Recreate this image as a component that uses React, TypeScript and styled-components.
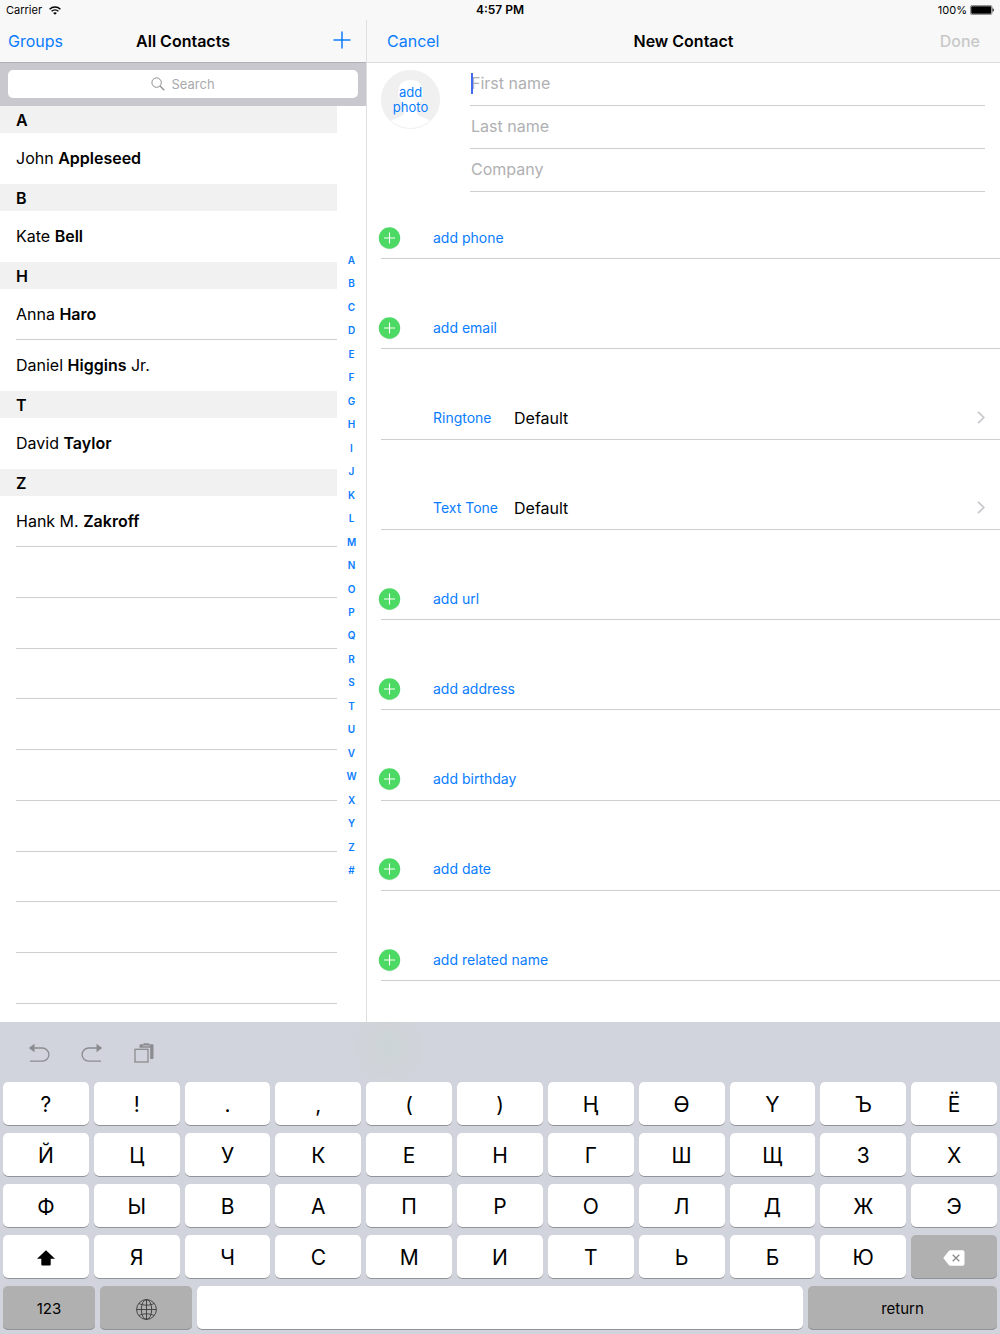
import React from "react";
import styled, { createGlobalStyle, css } from "styled-components";

const BLUE = "#0a7cff";
const LINE = "#cfced2";

const GlobalStyle = createGlobalStyle`
  *, *::before, *::after { box-sizing: border-box; }
  body {
    margin: 0;
    background: #fff;
    color: #000;
    font-family: Inter, "Liberation Sans", sans-serif;
    font-size: 16px;
  }
  button, input { font: inherit; color: inherit; }
  button { padding: 0; border: 0; background: none; text-align: inherit; }
  a { color: inherit; text-decoration: none; }
  ul { list-style: none; margin: 0; padding: 0; }
  svg { display: block; flex: none; }
`;

const Screen = styled.div`
  min-height: 100vh;
  display: flex;
  flex-direction: column;
`;

const StatusBar = styled.div`
  display: grid;
  grid-template-columns: 1fr auto 1fr;
  align-items: center;
  height: 20px;
  padding: 0 6px;
  background: #f8f8f8;
  font-size: 11px;
  line-height: 20px;
`;

const StatusSide = styled.div<{ $end?: boolean }>`
  display: flex;
  align-items: center;
  gap: ${(p) => (p.$end ? 3 : 7)}px;
  justify-content: ${(p) => (p.$end ? "flex-end" : "flex-start")};
`;

const Time = styled.time`
  font-size: 12px;
  font-weight: 600;
`;

const Split = styled.main`
  flex: 1;
  display: grid;
  grid-template-columns: 367px 1fr;
`;

const Pane = styled.section<{ $master?: boolean }>`
  display: flex;
  flex-direction: column;
  min-width: 0;
  ${(p) => p.$master && css`border-right: 1px solid #dfdfe1;`}
`;

const NavBar = styled.header<{ $master?: boolean }>`
  display: grid;
  grid-template-columns: 1fr auto 1fr;
  align-items: center;
  height: 43px;
  padding: ${(p) => (p.$master ? "0 8px" : "0 20px")};
  background: #f8f8f8;
  border-bottom: 1px solid ${(p) => (p.$master ? "#b1b0b5" : "#dcdcdc")};
`;

const Title = styled.h1`
  margin: 0;
  font-size: 16px;
  font-weight: 600;
  line-height: 20px;
`;

const NavButton = styled.button<{ $end?: boolean; $icon?: boolean }>`
  justify-self: ${(p) => (p.$end ? "end" : "start")};
  padding: ${(p) => (p.$icon ? "4px 7px 6px" : "0")};
  color: ${BLUE};
  line-height: 20px;
  &:disabled { color: #c8c8c8; font-weight: 500; }
`;

const SearchBar = styled.div`
  height: 43px;
  padding: 7px 8px 8px;
  background: #c9c8ce;
`;

const SearchField = styled.label`
  display: flex;
  align-items: center;
  justify-content: center;
  gap: 7px;
  height: 28px;
  border-radius: 5px;
  background: #fff;
`;

const SearchInput = styled.input`
  width: 44px;
  padding: 0;
  border: 0;
  outline: 0;
  background: none;
  font-size: 13px;
  &::placeholder { color: #a9a9ad; opacity: 1; }
`;

const ListArea = styled.div`
  flex: 1;
  display: grid;
  grid-template-columns: 1fr 29px;
`;

const Contacts = styled.div`
  display: flex;
  flex-direction: column;
  padding-bottom: 18px;
`;

const SectionHeader = styled.h2`
  margin: 0;
  padding-left: 16px;
  height: 27px;
  background: #f1f1f1;
  font-size: 16px;
  font-weight: 600;
  line-height: 29px;
`;

const ContactRow = styled.li<{ $line: boolean }>`
  height: 51px;
  margin-left: 16px;
  border-bottom: 1px solid ${(p) => (p.$line ? LINE : "transparent")};
  line-height: 51px;
`;

const Surname = styled.b`
  font-weight: 600;
`;

const BlankRows = styled.div`
  flex: 1;
  display: grid;
  grid-auto-rows: 1fr;
  margin-left: 16px;
`;

const BlankRow = styled.div`
  min-height: 50px;
  border-bottom: 1px solid ${LINE};
`;

const LetterIndex = styled.nav`
  display: flex;
  flex-direction: column;
  padding: 142px 0 140px;
`;

const Letter = styled.a`
  flex: 1;
  display: grid;
  place-items: center;
  color: ${BLUE};
  font-size: 10px;
  font-weight: 600;
  line-height: 12px;
`;

const Form = styled.form`
  flex: 1;
  display: flex;
  flex-direction: column;
  padding: 0 0 41px 14px;
`;

const Identity = styled.div`
  display: grid;
  grid-template-columns: 89px 1fr;
  align-items: start;
  padding-right: 15px;
`;

const PhotoButton = styled.button`
  display: grid;
  place-items: center;
  width: 59px;
  height: 59px;
  margin-top: 7px;
  color: ${BLUE};
  font-size: 13px;
  line-height: 15px;
  text-align: center;
  & > * { grid-area: 1 / 1; }
`;

const PhotoLabel = styled.span`
  width: 40px;
`;

const NameField = styled.label`
  position: relative;
  display: block;
  height: 43px;
  border-bottom: 1px solid ${LINE};
`;

const NameInput = styled.input`
  display: block;
  width: 100%;
  height: 40px;
  padding: 0 1px;
  border: 0;
  outline: 0;
  background: none;
  caret-color: transparent;
  &::placeholder { color: #b0b0b3; opacity: 1; }
`;

const Caret = styled.span`
  position: absolute;
  left: 1px;
  top: 10px;
  width: 2px;
  height: 21px;
  background: #426bf2;
`;

const Group = styled.div<{ $first: boolean }>`
  flex: ${(p) => (p.$first ? "none" : "1")};
  min-height: ${(p) => (p.$first ? 67 : 90)}px;
  display: flex;
  flex-direction: column;
  justify-content: flex-end;
`;

const FieldRow = styled.button<{ $value?: boolean }>`
  display: grid;
  grid-template-columns: ${(p) => (p.$value ? "81px 1fr auto" : "52px 1fr")};
  align-items: center;
  height: ${(p) => (p.$value ? 43 : 42)}px;
  padding: ${(p) => (p.$value ? "0 15px 0 52px" : "0")};
  border-bottom: 1px solid ${LINE};
`;

const FieldLabel = styled.span`
  color: ${BLUE};
  font-size: 14px;
  line-height: 20px;
`;

const FieldValue = styled.span`
  line-height: 20px;
`;

const Badge = styled.svg`
  margin-left: -3px;
`;

const Keyboard = styled.section`
  padding: 0 3px 4px;
  background: radial-gradient(circle at 389px 24px, #cdd4d7 8px, #cfd3d8 20px, #d1d4dc 42px);
`;

const KeyTools = styled.div`
  display: flex;
  align-items: center;
  gap: 31px;
  height: 60px;
  padding: 2px 0 0 25px;
  color: #8b8c90;
`;

const KeyRows = styled.div`
  display: grid;
  gap: 7px;
`;

const KeyRow = styled.div<{ $bottom?: boolean }>`
  display: grid;
  grid-template-columns: ${(p) => (p.$bottom ? "92px 92px 1fr 189px" : "repeat(11, 1fr)")};
  gap: 5px;
`;

const Key = styled.button<{ $dark?: boolean; $word?: boolean }>`
  display: grid;
  place-items: center;
  height: 44px;
  padding-top: 2px;
  border-radius: 5px;
  background: ${(p) => (p.$dark ? "#b0b0b0" : "#fff")};
  box-shadow: inset 0 -1px 0 #919398;
  font-size: ${(p) => (p.$word ? 15 : 21)}px;
  line-height: 24px;
`;

const WifiIcon = () => (
  <svg width="12" height="9" viewBox="0 0 12 9" fill="none" stroke="#000" strokeWidth="1.4">
    <path d="M0.6 3.2C3.6 0.2 8.4 0.2 11.4 3.2" />
    <path d="M2.6 5.3C4.5 3.4 7.5 3.4 9.4 5.3" />
    <path d="M6 8.8L4.1 6.9C5.2 5.9 6.8 5.9 7.9 6.9Z" fill="#000" stroke="none" />
  </svg>
);

const BatteryIcon = () => (
  <svg width="24" height="10" viewBox="0 0 24 10">
    <rect x="0.4" y="0.4" width="21.6" height="9.2" rx="1.8" fill="#fff" stroke="#555" strokeWidth="0.7" />
    <rect x="1.2" y="1.2" width="20" height="7.6" rx="1" />
    <path d="M22.6 3.2C24.2 3.6 24.2 6.4 22.6 6.8Z" />
  </svg>
);

const AddIcon = () => (
  <svg width="18" height="18" viewBox="0 0 18 18" stroke={BLUE} strokeWidth="1.5">
    <path d="M9 0.5V17.5M0.5 9H17.5" />
  </svg>
);

const SearchIcon = () => (
  <svg width="14" height="14" viewBox="0 0 14 14" fill="none" stroke="#8e8e93">
    <circle cx="5.6" cy="5.6" r="4.7" />
    <path d="M9 9L13.3 13.2" strokeWidth="1.3" />
  </svg>
);

const Silhouette = () => (
  <svg width="59" height="59" viewBox="0 0 59 59">
    <defs>
      <clipPath id="round"><circle cx="29.5" cy="29.5" r="29" /></clipPath>
    </defs>
    <circle cx="29.5" cy="29.5" r="29.3" fill="#f0f0f0" />
    <g clipPath="url(#round)" fill="#fff">
      <path d="M29.5 10C37 10 41.5 14 41.5 21C42.5 22 42 26 40.5 27C39.5 32 37.5 35 36 37V44C38 47 46 48 52 52V60H7V52C13 48 21 47 23 44V37C21.5 35 19.5 32 18.5 27C17 26 16.5 22 17.5 21C17.5 14 22 10 29.5 10Z" />
    </g>
    <circle cx="29.5" cy="29.5" r="29" fill="none" stroke="#f0f0f0" />
  </svg>
);

const PlusBadge = () => (
  <Badge width="24" height="24" viewBox="0 0 24 24">
    <circle cx="11.5" cy="12.6" r="10.7" fill="#dcebdf" />
    <circle cx="11.5" cy="12" r="10.7" fill="#4cd964" />
    <path d="M11.5 6.5V17.5M6 12H17" stroke="#fff" strokeWidth="1.1" />
  </Badge>
);

const Chevron = () => (
  <svg width="8" height="13" viewBox="0 0 8 13" fill="none" stroke="#c7c7cc" strokeWidth="1.7">
    <path d="M1 0.8L6.8 6.5L1 12.2" />
  </svg>
);

const UndoIcon = () => (
  <svg width="22" height="20" viewBox="0 0 22 20" fill="none" stroke="currentColor" strokeWidth="1.3">
    <path d="M5 5H14.3A6.6 6.6 0 0 1 14.3 18.2H2" />
    <path d="M0.8 5L6.5 0.8V9.2Z" fill="currentColor" stroke="none" />
  </svg>
);

const RedoIcon = () => (
  <svg width="22" height="20" viewBox="0 0 22 20" fill="none" stroke="currentColor" strokeWidth="1.3">
    <path d="M17 5H7.7A6.6 6.6 0 0 0 7.7 18.2H20" />
    <path d="M21.2 5L15.5 0.8V9.2Z" fill="currentColor" stroke="none" />
  </svg>
);

const PasteIcon = () => (
  <svg width="22" height="20" viewBox="0 0 22 20">
    <path d="M5.5 3.5V2.3A1 1 0 0 1 6.5 1.3H9.5V0.3H15V1.3H18.5A1 1 0 0 1 19.5 2.3V15A1 1 0 0 1 18.5 16H16.2V4.8H5.5Z" fill="currentColor" />
    <path d="M9 2.8H15.5" stroke="#d1d4dc" strokeWidth="0.7" />
    <rect x="1" y="6.3" width="13" height="12.7" fill="none" stroke="currentColor" strokeWidth="1.3" />
  </svg>
);

const ShiftIcon = () => (
  <svg width="18" height="16" viewBox="0 0 18 16">
    <path d="M9 0.3L18 8.7H13.7V14.5A1 1 0 0 1 12.7 15.5H5.3A1 1 0 0 1 4.3 14.5V8.7H0Z" />
  </svg>
);

const DeleteIcon = () => (
  <svg width="22" height="16" viewBox="0 0 22 16">
    <path d="M7.5 0.3H19.5A2 2 0 0 1 21.5 2.3V13.7A2 2 0 0 1 19.5 15.7H7.5Q6.5 15.7 5.8 14.9L0.3 8L5.8 1.1Q6.5 0.3 7.5 0.3Z" fill="#fff" />
    <path d="M9.7 4.7L16.3 11.3M16.3 4.7L9.7 11.3" stroke="#8a8a8c" strokeWidth="1.3" />
  </svg>
);

const GlobeIcon = () => (
  <svg width="21" height="21" viewBox="0 0 21 21" fill="none" stroke="#3a3a3a" strokeWidth="0.9">
    <circle cx="10.5" cy="10.5" r="9.9" />
    <ellipse cx="10.5" cy="10.5" rx="5.2" ry="9.9" />
    <path d="M10.5 0.6V20.4M0.6 10.5H20.4M3 4.5C7 6.7 14 6.7 18 4.5M3 16.5C7 14.3 14 14.3 18 16.5" />
  </svg>
);

type Contact = { first: string; last: string; suffix?: string };

const sections: { letter: string; people: Contact[] }[] = [
  { letter: "A", people: [{ first: "John", last: "Appleseed" }] },
  { letter: "B", people: [{ first: "Kate", last: "Bell" }] },
  { letter: "H", people: [{ first: "Anna", last: "Haro" }, { first: "Daniel", last: "Higgins", suffix: "Jr." }] },
  { letter: "T", people: [{ first: "David", last: "Taylor" }] },
  { letter: "Z", people: [{ first: "Hank M.", last: "Zakroff" }] },
];

const fields: { label: string; value?: string }[] = [
  { label: "add phone" },
  { label: "add email" },
  { label: "Ringtone", value: "Default" },
  { label: "Text Tone", value: "Default" },
  { label: "add url" },
  { label: "add address" },
  { label: "add birthday" },
  { label: "add date" },
  { label: "add related name" },
];

const letters = "ABCDEFGHIJKLMNOPQRSTUVWXYZ#".split("");
const keyRows = ["?!.,()ҢӨҮЪЁ", "ЙЦУКЕНГШЩЗХ", "ФЫВАПРОЛДЖЭ"];

export default function App() {
  return (
    <Screen>
      <GlobalStyle />
      <StatusBar>
        <StatusSide>Carrier <WifiIcon /></StatusSide>
        <Time>4:57 PM</Time>
        <StatusSide $end>100% <BatteryIcon /></StatusSide>
      </StatusBar>

      <Split>
        <Pane $master>
          <NavBar $master>
            <NavButton>Groups</NavButton>
            <Title>All Contacts</Title>
            <NavButton $end $icon aria-label="Add contact"><AddIcon /></NavButton>
          </NavBar>
          <SearchBar>
            <SearchField>
              <SearchIcon />
              <SearchInput type="text" placeholder="Search" aria-label="Search" />
            </SearchField>
          </SearchBar>
          <ListArea>
            <Contacts>
              {sections.map(({ letter, people }, s) => (
                <section key={letter} id={letter}>
                  <SectionHeader>{letter}</SectionHeader>
                  <ul>
                    {people.map((c, i) => (
                      <ContactRow key={c.last} $line={i < people.length - 1 || s === sections.length - 1}>
                        <a href={`#${letter}`}>
                          {c.first} <Surname>{c.last}</Surname>{c.suffix && ` ${c.suffix}`}
                        </a>
                      </ContactRow>
                    ))}
                  </ul>
                </section>
              ))}
              <BlankRows>
                {Array.from({ length: 9 }, (_, i) => <BlankRow key={i} />)}
              </BlankRows>
            </Contacts>
            <LetterIndex aria-label="Index">
              {letters.map((l) => <Letter key={l} href={`#${l}`}>{l}</Letter>)}
            </LetterIndex>
          </ListArea>
        </Pane>

        <Pane>
          <NavBar>
            <NavButton>Cancel</NavButton>
            <Title>New Contact</Title>
            <NavButton $end disabled>Done</NavButton>
          </NavBar>
          <Form>
            <Identity>
              <PhotoButton type="button">
                <Silhouette />
                <PhotoLabel>add photo</PhotoLabel>
              </PhotoButton>
              <div>
                {["First name", "Last name", "Company"].map((name, i) => (
                  <NameField key={name}>
                    <NameInput type="text" placeholder={name} aria-label={name} />
                    {i === 0 && <Caret />}
                  </NameField>
                ))}
              </div>
            </Identity>
            {fields.map(({ label, value }, i) => (
              <Group key={label} $first={i === 0}>
                <FieldRow type="button" $value={!!value}>
                  {!value && <PlusBadge />}
                  <FieldLabel>{label}</FieldLabel>
                  {value && <FieldValue>{value}</FieldValue>}
                  {value && <Chevron />}
                </FieldRow>
              </Group>
            ))}
          </Form>
        </Pane>
      </Split>

      <Keyboard aria-label="Keyboard">
        <KeyTools>
          <button aria-label="Undo"><UndoIcon /></button>
          <button aria-label="Redo"><RedoIcon /></button>
          <button aria-label="Paste"><PasteIcon /></button>
        </KeyTools>
        <KeyRows>
          {keyRows.map((row) => (
            <KeyRow key={row}>
              {row.split("").map((k) => <Key key={k}>{k}</Key>)}
            </KeyRow>
          ))}
          <KeyRow>
            <Key aria-label="Shift"><ShiftIcon /></Key>
            {"ЯЧСМИТЬБЮ".split("").map((k) => <Key key={k}>{k}</Key>)}
            <Key $dark aria-label="Delete"><DeleteIcon /></Key>
          </KeyRow>
          <KeyRow $bottom>
            <Key $dark $word>123</Key>
            <Key $dark aria-label="Next keyboard"><GlobeIcon /></Key>
            <Key aria-label="Space" />
            <Key $dark $word>return</Key>
          </KeyRow>
        </KeyRows>
      </Keyboard>
    </Screen>
  );
}
